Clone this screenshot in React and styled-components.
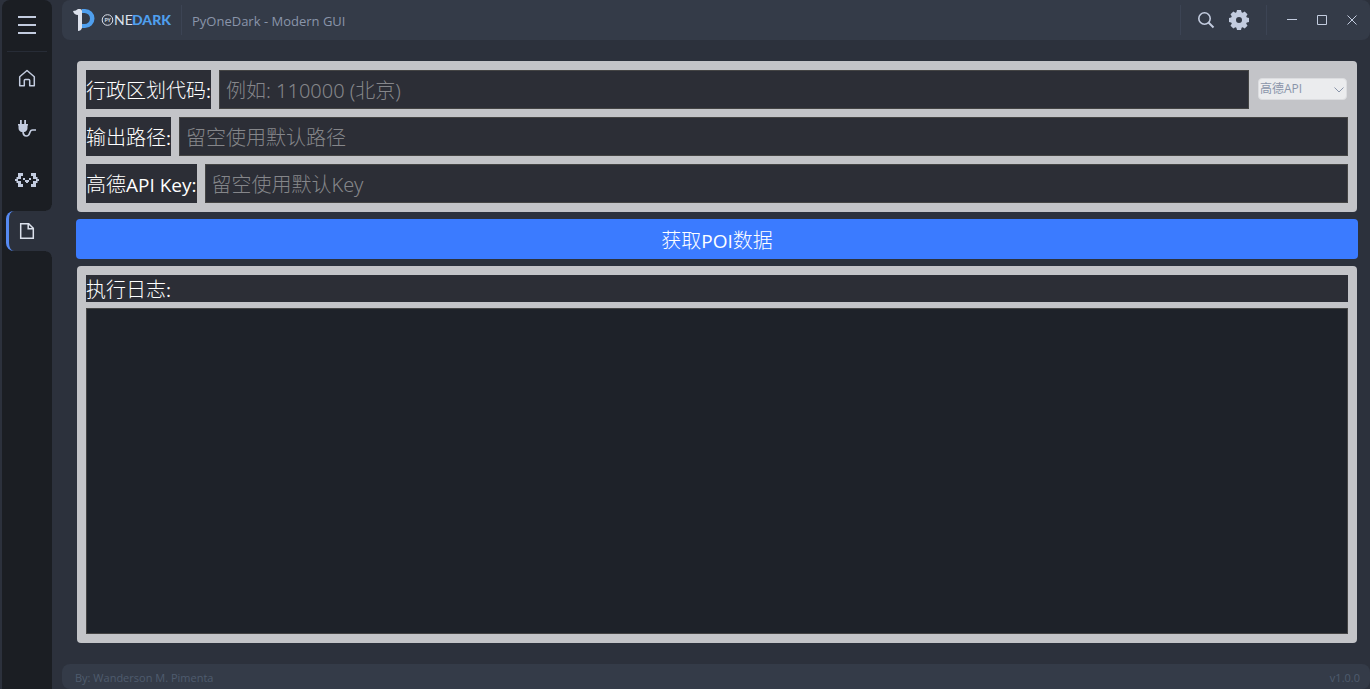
import React from "react";
import styled, { createGlobalStyle } from "styled-components";

const sans = `"Open Sans", "Noto Sans CJK SC", sans-serif`;
const inputSans = `"Noto Sans", "Noto Sans CJK SC", sans-serif`;

const GlobalStyle = createGlobalStyle`
  *, *::before, *::after { box-sizing: border-box; }
  body { margin: 0; background: #2c313c; font-family: ${sans}; }
`;

const Window = styled.div`
  display: flex;
  min-height: 100vh;
  padding-left: 2px;
  background: #2c313c;
`;

const Sidebar = styled.nav`
  display: flex;
  flex-direction: column;
  flex: none;
  width: 50px;
  border-radius: 8px 8px 0 0;
  background: #1b1e23;
`;

const Divider = styled.hr`
  width: 40px;
  height: 1px;
  margin: 1px 5px 0;
  border: 0;
  background: #272c36;
`;

const NavButton = styled.button`
  display: flex;
  align-items: center;
  justify-content: center;
  height: ${(p) => (p.$menu ? 50 : 51)}px;
  padding: 0;
  border: 0;
  background: transparent;
  color: #c3ccdf;
`;

const ActiveSlot = styled.div`
  position: relative;
  height: 40px;
  margin: 6px 0 6px 4px;
  border-left: 3px solid #568af2;
  border-radius: 8px 0 0 8px;
  background: #2c313c;

  &::before, &::after {
    content: "";
    position: absolute;
    right: 0;
    width: 6px;
    height: 6px;
  }
  &::before {
    bottom: 100%;
    background: radial-gradient(circle at 0 0, transparent 5px, #2c313c 6px);
  }
  &::after {
    top: 100%;
    background: radial-gradient(circle at 0 100%, transparent 5px, #2c313c 6px);
  }
`;

const ActiveButton = styled(NavButton)`
  width: 36px;
  height: 40px;
  color: #dce1ec;
`;

const Main = styled.div`
  display: flex;
  flex: 1;
  flex-direction: column;
  min-width: 0;
  margin-left: 10px;
`;

const TitleBar = styled.header`
  display: flex;
  align-items: center;
  height: 40px;
  padding: 0 3px 0 10px;
  border-radius: 8px;
  background: #343b48;
`;

const Logo = styled.div`
  display: flex;
  align-items: center;
  width: 109px;
`;

const Separator = styled.span`
  width: 1px;
  height: 30px;
  background: #3c4454;
`;

const Title = styled.h1`
  flex: 1;
  margin: 0 0 0 10px;
  padding-top: 2px;
  color: #8a95aa;
  font-size: 13px;
  line-height: 20px;
  font-weight: 400;
`;

const BarButton = styled.button`
  display: flex;
  align-items: center;
  justify-content: center;
  width: ${(p) => p.$width || 30}px;
  height: 30px;
  padding: 0;
  border: 0;
  background: transparent;
  color: #c3ccdf;
`;

const Tools = styled.div`
  display: flex;
  padding: 0 11px 0 8px;
`;

const WindowControls = styled.div`
  display: flex;
  padding-left: 10px;
`;

const Content = styled.main`
  display: flex;
  flex: 1;
  flex-direction: column;
  padding: 21px 12px 21px 14px;
`;

const Panel = styled.section`
  display: flex;
  flex: ${(p) => (p.$grow ? "1" : "none")};
  flex-direction: column;
  gap: ${(p) => (p.$grow ? 6 : 8)}px;
  margin: 0 1px;
  padding: 9px;
  border-radius: 4px;
  background: #c3c4c8;
`;

const Row = styled.div`
  display: flex;
  align-items: center;
  gap: 8px;
`;

const Label = styled.label`
  height: ${(p) => (p.$header ? 27 : 39)}px;
  padding-top: 2px;
  background: #2c2e36;
  color: #fff;
  font-size: 20px;
  line-height: ${(p) => (p.$header ? 25 : 37)}px;
  font-weight: 300;
  white-space: nowrap;
`;

const Latin = styled.span`
  font-size: 19px;
  font-weight: 400;
`;

const TextInput = styled.input`
  flex: 1;
  min-width: 0;
  height: 39px;
  padding: 2px 6px 0;
  border: 1px solid #444;
  background: #2c2e36;
  color: #fff;
  font: 300 20px/28px ${inputSans};

  &::placeholder { color: #85868a; opacity: 1; }
`;

const SelectBox = styled.div`
  position: relative;
  margin: 0 1px 1px;

  svg {
    position: absolute;
    right: 3px;
    top: 9px;
    pointer-events: none;
  }
`;

const Select = styled.select`
  display: block;
  width: 89px;
  height: 22px;
  padding: 0 1px;
  border: 1px solid #dcdde0;
  border-radius: 4px;
  appearance: none;
  background: #ebecee;
  color: #8a95aa;
  font: 12px/18px ${sans};
`;

const FetchButton = styled.button`
  height: 40px;
  margin: 7px 0;
  padding: 3px 0 0;
  border: 0;
  border-radius: 4px;
  background: #3b7bff;
  color: #fff;
  font: 300 20px/28px ${sans};
`;

const Log = styled.textarea`
  flex: 1;
  min-height: 120px;
  border: 1px solid #444;
  background: #1e2229;
  color: #dce1ec;
  font: 14px/20px ${sans};
  resize: none;
`;

const Footer = styled.footer`
  display: flex;
  justify-content: space-between;
  height: 25px;
  padding: 4px 10px 0 13px;
  border-radius: 8px;
  background: #343b48;
  color: #4f5b6e;
  font-size: 11px;
  line-height: 20px;
`;

const MenuIcon = () => (
  <svg width="18" height="18" fill="currentColor">
    <path d="M0 0h18v2H0zM0 8h18v2H0zM0 16h18v2H0z" />
  </svg>
);

const HomeIcon = () => (
  <svg width="18" height="18" fill="none" stroke="currentColor" strokeWidth="1.5" strokeLinejoin="round">
    <path d="M1.7 7.7 9 1.5l7.3 6.2v9h-4.6v-5.2q0-1-1-1H7.300q-1 0-1 1v5.200H1.700z" />
  </svg>
);

const PlugIcon = () => (
  <svg width="20" height="20" fill="currentColor">
    <path d="M3 1h1.800v4H3zM7.200 1H9v4H7.200zM1 5h10v1.500h-.5V9c0 2-1.200 3.500-3 3.900h-3C2.700 12.500 1.500 11 1.500 9V6.500H1z" />
    <path d="M6 12c0 4 1.500 5 3.500 5 4.500 0 2-6 6-6H19" fill="none" stroke="currentColor" strokeWidth="1.700" />
  </svg>
);

const WidgetIcon = () => (
  <svg width="24" height="14" fill="currentColor">
    <path d="M3 0h5v3H6v3H3V8h3v3h2v3H3v-4H1.500V8H0V6h1.500V4H3zM21 0h-5v3h2v3h3V8h-3v3h-2v3h5v-4h1.500V8H24V6h-1.500V4H21zM8 5h2v2H8zM14 5h2v2h-2zM10 7h4v2h-1v1h-2V9h-1z" />
  </svg>
);

const FileIcon = () => (
  <svg width="16" height="18" fill="none" stroke="currentColor" strokeWidth="1.500">
    <path d="M1.700 1.700h8l4.600 4.600v10H1.700zM9.200 1.700v5.100h5.100" />
  </svg>
);

const LogoMark = () => (
  <svg width="106" height="24">
    <path d="M10 1h3a9 9 0 0 1 0 19h-3v-4h2.500a5.500 5.500 0 0 0 0-11H10z" fill="#4f9fee" />
    <path d="M1 3q3 0 5-2h2q2 0 2 2v17q-1 3-4 3V7Q2 7 1 3z" fill="#dce1ec" />
    <circle cx="35.500" cy="12" r="5.300" fill="none" stroke="#dce1ec" />
    <text x="35.500" y="14" textAnchor="middle" fontFamily="Lato" fontSize="5" fontWeight="700" fill="#dce1ec">PY</text>
    <text x="42" y="17" fontFamily="Lato" fontSize="14" fontWeight="400" fill="#dce1ec">NE</text>
    <text x="60" y="17" fontFamily="Lato" fontSize="14" fontWeight="900" fill="#4f9fee">DARK</text>
  </svg>
);

const SearchIcon = () => (
  <svg width="18" height="18" fill="none" stroke="currentColor" strokeWidth="1.600">
    <circle cx="7.500" cy="7.500" r="5.700" />
    <path d="m11.500 11.500 5 5" strokeWidth="2" />
  </svg>
);

const teeth = [0, 45, 90, 135, 180, 225, 270, 315];
const GearIcon = () => (
  <svg width="20" height="20">
    {teeth.map((a) => (
      <path key={a} d="M7 4 8 0h4l1 4z" fill="currentColor" transform={`rotate(${a} 10 10)`} />
    ))}
    <circle cx="10" cy="10" r="5.500" fill="none" stroke="currentColor" strokeWidth="5" />
  </svg>
);

const GLYPHS = {
  minimize: "M0 4.500h10",
  maximize: "M.5.5h9v9h-9z",
  close: "m.5.5 9 9m0-9-9 9",
};
const ControlIcon = ({ kind }) => (
  <svg width="10" height="10" fill="none" stroke="currentColor"><path d={GLYPHS[kind]} /></svg>
);

export default function App() {
  return (
    <>
      <GlobalStyle />
      <Window>
        <Sidebar aria-label="Main">
          <NavButton $menu aria-label="Menu"><MenuIcon /></NavButton>
          <Divider />
          <NavButton aria-label="Home"><HomeIcon /></NavButton>
          <NavButton aria-label="Plugins"><PlugIcon /></NavButton>
          <NavButton aria-label="Widgets"><WidgetIcon /></NavButton>
          <ActiveSlot>
            <ActiveButton aria-label="Files"><FileIcon /></ActiveButton>
          </ActiveSlot>
        </Sidebar>
        <Main>
          <TitleBar>
            <Logo><LogoMark /></Logo>
            <Separator />
            <Title>PyOneDark - Modern GUI</Title>
            <Separator />
            <Tools>
              <BarButton $width={34} aria-label="Search"><SearchIcon /></BarButton>
              <BarButton $width={32} aria-label="Settings"><GearIcon /></BarButton>
            </Tools>
            <Separator />
            <WindowControls>
              <BarButton aria-label="Minimize"><ControlIcon kind="minimize" /></BarButton>
              <BarButton aria-label="Maximize"><ControlIcon kind="maximize" /></BarButton>
              <BarButton aria-label="Close"><ControlIcon kind="close" /></BarButton>
            </WindowControls>
          </TitleBar>
          <Content>
            <Panel>
              <Row>
                <Label htmlFor="region">行政区划代码<Latin>:</Latin></Label>
                <TextInput id="region" placeholder="例如: 110000 (北京)" />
                <SelectBox>
                  <Select aria-label="API"><option>高德API</option></Select>
                  <svg width="10" height="6" fill="none" stroke="#8a95aa"><path d="m.5.5 4.500 4.500L9.500.5" /></svg>
                </SelectBox>
              </Row>
              <Row>
                <Label htmlFor="path">输出路径<Latin>:</Latin></Label>
                <TextInput id="path" placeholder="留空使用默认路径" />
              </Row>
              <Row>
                <Label htmlFor="key">高德<Latin>API Key:</Latin></Label>
                <TextInput id="key" placeholder="留空使用默认Key" />
              </Row>
            </Panel>
            <FetchButton>获取<Latin>POI</Latin>数据</FetchButton>
            <Panel $grow>
              <Label $header htmlFor="log">执行日志<Latin>:</Latin></Label>
              <Log id="log" readOnly />
            </Panel>
          </Content>
          <Footer>
            <span>By: Wanderson M. Pimenta</span>
            <span>v1.0.0</span>
          </Footer>
        </Main>
      </Window>
    </>
  );
}
